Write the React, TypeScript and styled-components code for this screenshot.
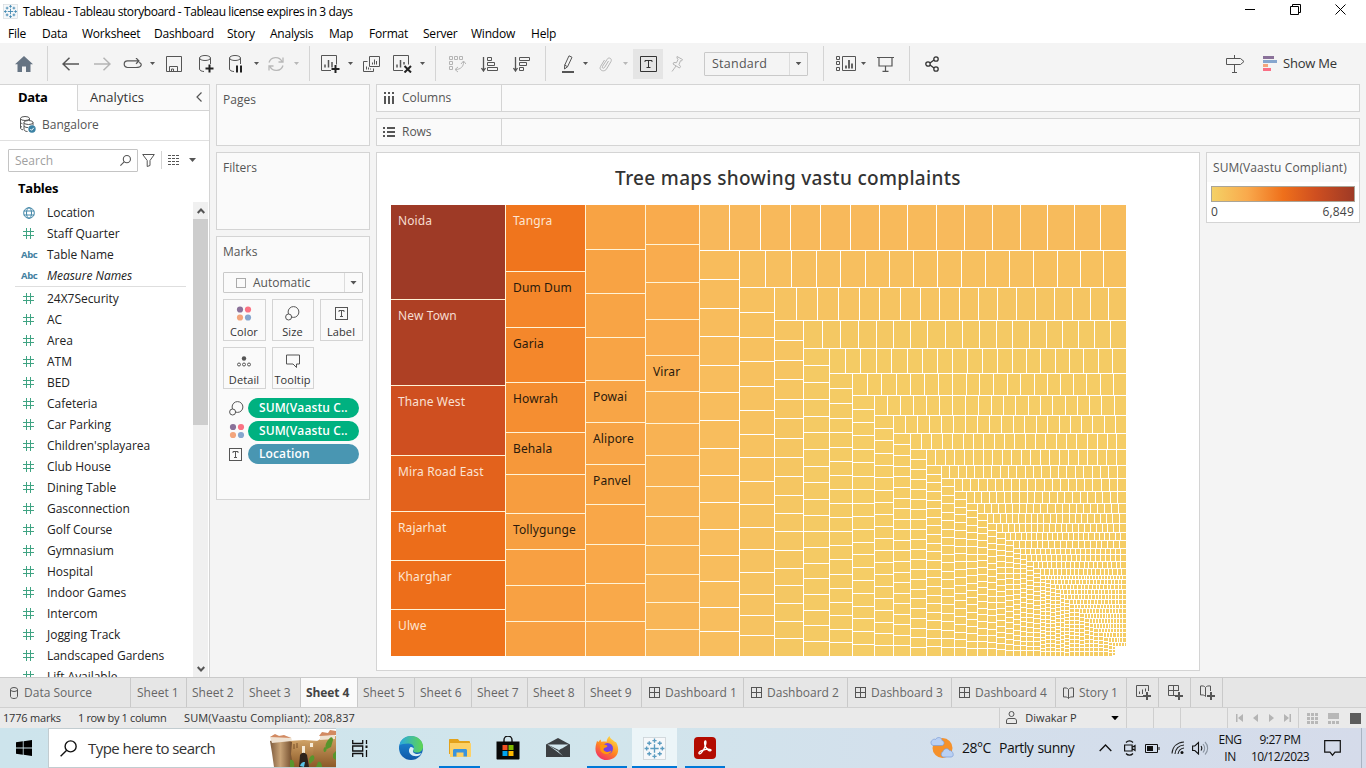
import React from "react";
import styled, { createGlobalStyle } from "styled-components";

const ui = `"Open Sans", "Noto Sans", sans-serif`;
const win = `"Open Sans", "Noto Sans", sans-serif`;
const chart = `"Noto Sans", "Open Sans", sans-serif`;
const line = "#d4d4d4";

const Global = createGlobalStyle`
  * { box-sizing: border-box; }
  html, body { margin: 0; padding: 0; overflow: hidden; }
  body { width: 1366px; height: 768px; font-family: ${ui}; font-size: 12px; color: #333; background: #f5f5f5; }
  svg { display: block; flex: none; }
`;

const Window = styled.div`
  width: 1366px;
  height: 768px;
  display: flex;
  flex-direction: column;
  overflow: hidden;
  white-space: nowrap;
`;

/* ---------- title and menu ---------- */
const TitleBar = styled.header`
  height: 24px;
  flex: none;
  background: #fff;
  display: flex;
  align-items: center;
  padding: 0 0 2px 3px;
  font-family: ${win};
  font-size: 12px;
  letter-spacing: -0.41px;
  color: #000;
`;
const TitleText = styled.span`
  margin-left: 5px;
  flex: 1;
`;
const Controls = styled.div`
  display: flex;
  gap: 34px;
  margin-right: 20px;
  margin-top: -3px;
`;
const MenuBar = styled.nav`
  height: 19px;
  flex: none;
  background: #fff;
  display: flex;
  font-family: ${win};
  font-size: 12px;
  line-height: 19px;
  letter-spacing: -0.22px;
  color: #000;
`;
const MenuItem = styled.span<{ $w: number }>`
  width: ${(p) => p.$w}px;
  flex: none;
`;

/* ---------- toolbar ---------- */
const Toolbar = styled.div`
  height: 41px;
  flex: none;
  background: #f4f4f4;
  display: flex;
  align-items: center;
`;
const Tool = styled.div<{ $gap: number; $w: number; $on?: boolean }>`
  margin-left: ${(p) => p.$gap}px;
  width: ${(p) => p.$w}px;
  height: ${(p) => (p.$on ? 30 : 20)}px;
  flex: none;
  display: flex;
  align-items: center;
  justify-content: center;
  background: ${(p) => (p.$on ? "#e5e5e5" : "transparent")};
`;
const Rule = styled.div<{ $gap: number }>`
  margin-left: ${(p) => p.$gap}px;
  width: 1px;
  height: 35px;
  flex: none;
  background: #d4d4d4;
`;
const Caret = styled.div<{ $gap?: number; $c?: string; $s?: number }>`
  margin-left: ${(p) => p.$gap ?? 0}px;
  flex: none;
  width: ${(p) => (p.$s ?? 2.5) * 2}px;
  height: ${(p) => (p.$s ?? 2.5) + 0.5}px;
  background: ${(p) => p.$c ?? "#555"};
  clip-path: polygon(0 0, 100% 0, 50% 100%);
`;
const Select = styled.div<{ $w: number; $h: number; $gap?: number; $drop: number }>`
  margin-left: ${(p) => p.$gap ?? 0}px;
  width: ${(p) => p.$w}px;
  height: ${(p) => p.$h}px;
  border: 1px solid #c9c9c9;
  border-radius: 1px;
  display: flex;
  flex: none;
  align-items: center;
  > :last-child {
    width: ${(p) => p.$drop}px;
  }
`;
const SelectText = styled.span<{ $size: number; $pad: number; $ls?: number }>`
  flex: 1;
  display: flex;
  align-items: center;
  gap: 7px;
  padding-left: ${(p) => p.$pad}px;
  font-size: ${(p) => p.$size}px;
  letter-spacing: ${(p) => p.$ls ?? 0}px;
  color: #555;
`;
const Drop = styled.span`
  height: 100%;
  border-left: 1px solid #dcdcdc;
  display: flex;
  align-items: center;
  justify-content: center;
`;
const ShowMe = styled.span`
  margin-left: 6px;
  padding-bottom: 2px;
  font-size: 13px;
  letter-spacing: -0.2px;
  color: #333;
`;

/* ---------- workspace ---------- */
const Work = styled.main`
  height: 593px;
  flex: none;
  display: flex;
  background: #f4f4f4;
`;
const Side = styled.aside`
  width: 210px;
  flex: none;
  background: #fff;
  border-right: 1px solid ${line};
  border-top: 1px solid ${line};
  display: flex;
  flex-direction: column;
`;
const SideTabs = styled.div`
  display: flex;
  height: 26px;
  flex: none;
`;
const SideTab = styled.div<{ $active?: boolean }>`
  width: ${(p) => (p.$active ? 77 : 132)}px;
  padding: 0 7px 2px ${(p) => (p.$active ? 18 : 12)}px;
  display: flex;
  align-items: center;
  justify-content: space-between;
  font-size: 13px;
  font-weight: ${(p) => (p.$active ? 700 : 400)};
  letter-spacing: ${(p) => (p.$active ? -0.4 : 0.05)}px;
  color: ${(p) => (p.$active ? "#000" : "#333")};
  background: ${(p) => (p.$active ? "#fff" : "#fafafa")};
  border: 0 solid ${line};
  border-width: ${(p) => (p.$active ? "0" : "0 0 1px 1px")};
`;
const Source = styled.div`
  height: 30px;
  flex: none;
  border-bottom: 1px solid #e0e0e0;
  padding: 0 0 2px 19px;
  display: flex;
  align-items: center;
  gap: 6px;
  font-size: 12px;
  color: #555;
`;
const SearchRow = styled.div`
  height: 38px;
  flex: none;
  padding-left: 8px;
  display: flex;
  align-items: center;
`;
const SearchBox = styled.div`
  width: 130px;
  height: 23px;
  border: 1px solid #c4c4c4;
  border-radius: 1px;
  padding: 0 6px;
  display: flex;
  align-items: center;
  justify-content: space-between;
  color: #a0a0a0;
  font-size: 12px;
`;
const TablesHead = styled.div`
  height: 23px;
  flex: none;
  padding-left: 18px;
  line-height: 19px;
  font-size: 13px;
  font-weight: 700;
  letter-spacing: -0.25px;
  color: #000;
`;
const FieldArea = styled.div`
  height: 475px;
  display: flex;
  overflow: hidden;
`;
const Fields = styled.div`
  width: 193px;
`;
const Field = styled.div<{ $italic?: boolean }>`
  height: 21px;
  padding-left: 19px;
  display: flex;
  align-items: center;
  font-size: 12px;
  letter-spacing: -0.03px;
  color: #222;
  font-style: ${(p) => (p.$italic ? "italic" : "normal")};
`;
const FieldIcon = styled.span`
  width: 28px;
  flex: none;
  display: flex;
  padding-left: 4px;
`;
const Abc = styled.span`
  margin-left: -2px;
  font-family: "Open Sans", sans-serif;
  font-style: normal;
  font-size: 9.5px;
  font-weight: 700;
  letter-spacing: -0.4px;
  color: #4381a1;
`;
const FieldRule = styled.div`
  height: 1px;
  margin: 0 7px 1px 15px;
  background: #dedede;
`;
const Scroll = styled.div`
  width: 15px;
  background: #f0f0f0;
  display: flex;
  flex-direction: column;
  align-items: center;
`;
const ScrollEnd = styled.div`
  height: 17px;
  flex: none;
  display: flex;
  align-items: center;
`;
const Thumb = styled.div`
  height: 206px;
  width: 15px;
  flex: none;
  background: #cdcdcd;
  margin-bottom: auto;
`;

const Shelves = styled.div`
  width: 154px;
  margin-left: 6px;
  flex: none;
  display: flex;
  flex-direction: column;
  gap: 6px;
`;
const Card = styled.section<{ $h: number }>`
  height: ${(p) => p.$h}px;
  flex: none;
  border: 1px solid ${line};
  background: #fafafa;
`;
const CardTitle = styled.div`
  padding: 0 6px;
  height: 29px;
  line-height: 30px;
  font-size: 12px;
  color: #555;
`;
const MarksBody = styled.div`
  padding: 6px 6px 0;
`;
const MarkGrid = styled.div`
  margin-top: 6px;
  display: grid;
  grid-template-columns: 43px 42px 43px;
  grid-template-rows: 42px 42px;
  gap: 6px;
`;
const MarkButton = styled.div`
  border: 1px solid ${line};
  display: flex;
  flex-direction: column;
  align-items: center;
  justify-content: space-between;
  padding: 5px 1px 0 0;
  font-size: 11px;
  line-height: 17px;
  letter-spacing: 0.1px;
  color: #333;
  svg {
    height: 17px;
  }
`;
const Pills = styled.div`
  margin-top: 9px;
  display: flex;
  flex-direction: column;
  gap: 3px;
`;
const PillRow = styled.div`
  height: 20px;
  padding-left: 6px;
  display: flex;
  align-items: center;
  justify-content: space-between;
  padding-right: 4px;
`;
const Pill = styled.div<{ $c: string }>`
  width: 111px;
  height: 20px;
  border-radius: 10px;
  padding-left: 11px;
  line-height: 19px;
  font-size: 12px;
  font-weight: 600;
  letter-spacing: 0.1px;
  color: #fff;
  background: ${(p) => p.$c};
`;

const Canvas = styled.div`
  width: 984px;
  margin-left: 6px;
  flex: none;
  display: flex;
  flex-direction: column;
  gap: 6px;
`;
const Shelf = styled.div`
  height: 28px;
  flex: none;
  border: 1px solid ${line};
  background: #fafafa;
  display: flex;
`;
const ShelfName = styled.div`
  width: 125px;
  border-right: 1px solid ${line};
  padding: 0 0 1px 6px;
  display: flex;
  align-items: center;
  gap: 7px;
  font-size: 12px;
  letter-spacing: -0.02px;
  color: #555;
`;
const ViewRow = styled.div`
  display: flex;
  gap: 6px;
`;
const View = styled.section`
  width: 824px;
  height: 519px;
  border: 1px solid ${line};
  background: #fff;
  padding-left: 14px;
`;
const ViewTitle = styled.h1`
  margin: 0 14px 0 0;
  height: 52px;
  line-height: 50px;
  text-align: center;
  font-family: ${chart};
  font-size: 19px;
  font-weight: 500;
  letter-spacing: 0.32px;
  color: #333;
`;
const CellLabel = styled.text`
  font-family: ${chart};
  font-size: 12px;
  letter-spacing: 0.12px;
`;
const Legend = styled.section`
  width: 154px;
  height: 71px;
  border: 1px solid ${line};
  background: #fff;
`;
const LegendTitle = styled.div`
  height: 29px;
  line-height: 30px;
  padding-left: 6px;
  background: #fafafa;
  font-size: 12px;
  letter-spacing: 0.1px;
  color: #555;
`;
const Ramp = styled.div`
  margin: 4px 4px 0;
  height: 16px;
  border: 1px solid #aaa598;
  background: linear-gradient(90deg, #f4d166, #f9a94c 25%, #ef701b 50%, #cf4f20 73%, #9e3a26);
`;
const RampEnds = styled.div`
  padding: 0 5px 0 4px;
  display: flex;
  justify-content: space-between;
  font-size: 12px;
  line-height: 19px;
  letter-spacing: 0.2px;
  color: #444;
`;

/* ---------- sheet tabs and status ---------- */
const Tabs = styled.div`
  height: 31px;
  flex: none;
  display: flex;
  background: #e6e6e6;
  border-top: 1px solid #cacaca;
  border-bottom: 1px solid #d0d0d0;
`;
const Tab = styled.div<{ $w: number; $pad: number; $active?: boolean }>`
  width: ${(p) => p.$w}px;
  flex: none;
  border-right: 1px solid #c9c9c9;
  padding-left: ${(p) => p.$pad}px;
  display: flex;
  align-items: center;
  gap: 5px;
  font-size: 12px;
  letter-spacing: ${(p) => (p.$active ? -0.1 : 0)}px;
  font-weight: ${(p) => (p.$active ? 700 : 400)};
  color: ${(p) => (p.$active ? "#444" : "#666")};
  background: ${(p) => (p.$active ? "#fafafa" : "transparent")};
`;
const Status = styled.div`
  height: 20px;
  flex: none;
  display: flex;
  background: #eaeaea;
  font-size: 11px;
  line-height: 20px;
  color: #333;
`;
const StatusText = styled.span<{ $w: number; $ls?: number }>`
  width: ${(p) => p.$w}px;
  letter-spacing: ${(p) => p.$ls ?? 0}px;
  flex: none;
`;
const StatusCell = styled.div<{ $w: number }>`
  width: ${(p) => p.$w}px;
  flex: none;
  border-left: 1px solid #cfcfcf;
  display: flex;
  align-items: center;
`;

/* ---------- taskbar ---------- */
const Taskbar = styled.footer`
  height: 40px;
  flex: none;
  display: flex;
  background: linear-gradient(90deg, #cde4ec, #d1e5ec 45%, #d3e0ec 65%, #d5dbea);
  font-family: ${win};
  color: #111;
`;
const Launch = styled.div<{ $gap: number; $w: number; $open?: boolean; $active?: boolean }>`
  margin-left: ${(p) => p.$gap}px;
  width: ${(p) => p.$w}px;
  flex: none;
  display: flex;
  align-items: center;
  justify-content: center;
  background: ${(p) => (p.$active ? "#ecf5f8" : "transparent")};
  box-shadow: ${(p) => (p.$open ? "inset 0 -2px #0078d7" : "none")};
`;
const TaskSearch = styled.div`
  width: 288px;
  border: 1px solid #c2ccd0;
  border-right: 0;
  background: #fff;
  display: flex;
  align-items: center;
  padding-left: 11px;
`;
const TaskSearchText = styled.span`
  flex: 1;
  margin-left: 11px;
  font-size: 15px;
  letter-spacing: -0.57px;
  color: #333;
`;
const Weather = styled.span`
  margin-left: 7px;
  width: 134px;
  line-height: 40px;
  font-size: 14px;
  letter-spacing: -0.52px;
  word-spacing: 1px;
`;
const Stack = styled.div<{ $w: number; $gap: number }>`
  margin-left: ${(p) => p.$gap}px;
  width: ${(p) => p.$w}px;
  flex: none;
  text-align: center;
  font-size: 12px;
  line-height: 17px;
  padding-top: 3px;
  letter-spacing: -0.55px;
`;
const Edge = styled.div`
  margin-left: auto;
  margin-right: 4px;
  width: 1px;
  background: #a9b4c2;
`;

/* ---------- icons ---------- */
type IconProps = { w: number; h: number; c?: string; sw?: number; children: React.ReactNode };
const Icon = ({ w, h, c = "#555", sw = 1, children }: IconProps) => (
  <svg width={w} height={h} viewBox={`0 0 ${w} ${h}`} fill="none" stroke={c} strokeWidth={sw}>
    {children}
  </svg>
);

const Db = ({ children }: { children: React.ReactNode }) => (
  <Icon w={16} h={20}>
    <ellipse cx="6" cy="4" rx="5.5" ry="2.5" />
    <path d="M.5 4v11c0 1.4 2 2.4 4.5 2.5M11.5 4v6" />
    {children}
  </Icon>
);
const Sizes = () => (
  <Icon w={15} h={15}>
    <circle cx="8.5" cy="6" r="5.4" />
    <circle cx="3.6" cy="11" r="3" fill="#fafafa" />
  </Icon>
);
const Dots4 = () => (
  <Icon w={16} h={16} c="none">
    <circle cx="4" cy="4" r="3.1" fill="#8a7199" />
    <circle cx="12" cy="4" r="3.1" fill="#fa7283" />
    <circle cx="4" cy="12" r="3.1" fill="#f3a57c" />
    <circle cx="12" cy="12" r="3.1" fill="#86a6ce" />
  </Icon>
);
const TBox = ({ s = 13, c = "#555" }: { s?: number; c?: string }) => {
  const m = s / 2;
  return (
    <Icon w={s} h={s} c={c}>
      <rect x=".5" y=".5" width={s - 1} height={s - 1} />
      <path d={`M${m - 2.5} ${m - 1.5}v-1.5h5v1.5M${m} ${m - 3}v6M${m - 1.5} ${m + 3}h3`} />
    </Icon>
  );
};
const GridIcon = () => (
  <Icon w={11} h={11}>
    <rect x=".5" y=".5" width="10" height="10" />
    <path d="M5.5 0v11M0 5.5h11" />
  </Icon>
);
const Book = () => (
  <Icon w={11} h={12}>
    <path d="M.5 1c2-.3 4 0 5 1.500 1-1.500 3-1.800 5-1.500v9c-2-.3-4 0-5 1.500-1-1.500-3-1.800-5-1.500zM5.500 2.500v9" />
  </Icon>
);
const Magnifier = ({ s, c = "#555" }: { s: number; c?: string }) => (
  <svg width={s} height={s} viewBox="0 0 16 16" fill="none" stroke={c} strokeWidth={s > 12 ? 1.3 : 1.6}>
    <circle cx="10" cy="6" r="5.200" />
    <path d="M6.300 9.700L.6 15.400" />
  </svg>
);
const Hash = () => (
  <Icon w={11} h={11} c="#3fa382">
    <path d="M3.500 0v11M7.500 0v11M0 3.500h11M0 7.500h11" />
  </Icon>
);
const Globe = () => (
  <Icon w={12} h={12} c="#4487a8">
    <circle cx="6" cy="6" r="5.300" />
    <ellipse cx="6" cy="6" rx="2.500" ry="5.300" />
    <path d="M.7 4h10.600M.7 8h10.600" />
  </Icon>
);
const Sparks = ({ s, c = "#3f87b0" }: { s: number; c?: string }) => (
  <svg width={s} height={s} viewBox="0 0 22 22" fill="none" stroke={c} strokeWidth="1.300">
    <rect x=".5" y=".5" width="21" height="21" fill="#f6f8fa" stroke="#ccd3d8" strokeWidth=".8" />
    <path d="M11 7v8M7 11h8M11 1.500v4M9 3.500h4M11 16.500v4M9 18.500h4M3.500 9v4M1.500 11h4M18.500 9v4M16.500 11h4" />
    <path d="M6 4v4M4 6h4M16 4v4M14 6h4M6 14v4M4 16h4M16 14v4M14 16h4" />
  </svg>
);

/* ---------- treemap ---------- */
type Strip = { end: number; cuts: number[] | number; from: string; to?: string };

const pale = "#f5cd66";
const columns: Strip[] = [
  { end: 699, cuts: [], from: "#f9a94b" },
  { end: 739, cuts: [279, 308, 336, 365, 392, 420, 448, 475, 502, 529, 555, 581, 607, 631], from: "#f8bc5c", to: "#f8be5e" },
  { end: 774, cuts: [312, 337, 361, 386, 410, 434, 457, 481, 504, 527, 549, 572, 594, 615, 635], from: "#f7c15f", to: "#f6c361" },
  { end: 803, cuts: [340, 360, 379, 399, 418, 438, 457, 476, 495, 513, 531, 550, 568, 585, 603, 621, 638], from: "#f6c562", to: "#f4c863" },
  { end: 829, cuts: [365, 382, 399, 416, 432, 449, 466, 482, 499, 515, 531, 547, 563, 578, 594, 610, 625, 641], from: "#f4ca64" },
  { end: 852, cuts: [388, 403, 418, 432, 447, 461, 475, 489, 503, 517, 531, 545, 559, 574, 588, 602, 615, 629, 642], from: "#f4cb64" },
  { end: 874, cuts: [409, 422, 435, 449, 462, 476, 489, 503, 516, 529, 542, 554, 567, 580, 593, 606, 618, 631, 644], from: pale },
  { end: 893, cuts: [428, 440, 453, 465, 477, 490, 502, 514, 526, 538, 550, 562, 574, 586, 598, 610, 622, 633, 645], from: pale },
  { end: 910, cuts: [444, 455, 466, 476, 487, 498, 508, 519, 529, 540, 550, 561, 572, 582, 593, 603, 614, 624, 635, 645], from: pale },
  { end: 926, cuts: [459, 469, 479, 489, 499, 509, 519, 529, 539, 549, 559, 569, 579, 589, 598, 608, 618, 628, 637, 647], from: pale },
  ...(
    [
      [941, 8.65], [954, 8.5], [966, 7.7], [977, 7.4], [987, 6.8], [996, 6.5], [1005, 5.8], [1013, 5.5],
      [1020, 5], [1026, 4.8], [1033, 4.8], [1040, 4.5], [1045, 3.7], [1050, 4], [1055, 4], [1060, 3.7],
      [1064, 4], [1069, 3.5], [1074, 4], [1079, 4], [1084, 4], [1089, 4], [1093, 3.8], [1098, 3.8],
      [1103, 3.8], [1108, 3.8], [1112, 3],
    ] as [number, number][]
  ).map(([end, cuts]) => ({ end, cuts, from: pale })),
];
const rows: Strip[] = [
  { end: 250, cuts: [729, 760, 790, 820, 850, 879, 907, 936, 964, 992, 1020, 1047, 1074, 1100], from: "#f8b85b", to: "#f7bc5c" },
  { end: 287, cuts: [765, 791, 816, 840, 865, 889, 913, 937, 961, 985, 1009, 1033, 1057, 1080, 1103], from: "#f7bf5f", to: "#f7c15f" },
  { end: 320, cuts: [796, 817, 838, 859, 879, 900, 920, 939, 959, 978, 997, 1016, 1035, 1054, 1072, 1090, 1108], from: "#f6c361", to: "#f5c662" },
  { end: 348, cuts: [822, 840, 858, 876, 893, 910, 927, 945, 962, 979, 996, 1012, 1029, 1046, 1062, 1078, 1094, 1110], from: "#f4c863", to: "#f4ca64" },
  { end: 373, cuts: [845, 860, 876, 891, 907, 922, 937, 952, 967, 982, 997, 1012, 1026, 1040, 1055, 1069, 1083, 1098, 1112], from: "#f4cb64" },
  { end: 395, cuts: [867, 881, 896, 910, 924, 938, 952, 966, 979, 993, 1007, 1020, 1034, 1047, 1060, 1073, 1086, 1100, 1113], from: "#f5cc65" },
  { end: 415, cuts: [887, 900, 913, 926, 939, 952, 965, 978, 991, 1003, 1015, 1028, 1040, 1052, 1065, 1077, 1089, 1101, 1114], from: pale },
  { end: 433, cuts: [905, 917, 929, 941, 953, 965, 977, 989, 1001, 1013, 1024, 1036, 1047, 1059, 1070, 1081, 1092, 1104, 1115], from: pale },
  { end: 449, cuts: [921, 931, 942, 952, 963, 973, 983, 994, 1004, 1014, 1025, 1035, 1045, 1056, 1066, 1076, 1087, 1097, 1107, 1116], from: pale },
  ...(
    [
      [465, 9.5], [478, 8.4], [491, 8], [503, 7.4], [513, 6.9], [523, 6.2], [532, 6], [540, 5.3], [548, 5.9],
      [554, 4.9], [561, 5], [568, 4.6], [575, 4.3], [579, 3], [584, 3.6], [589, 3.6], [594, 3.4], [599, 3.4],
      [604, 3.4], [608, 3.2], [613, 3.2], [618, 3], [623, 3], [628, 3], [632, 3], [637, 3], [642, 3],
    ] as [number, number][]
  ).map(([end, cuts]) => ({ end, cuts, from: pale })),
];

const mix = (a: string, b: string, t: number) =>
  "#" +
  [1, 3, 5]
    .map((i) => {
      const p = parseInt(a.slice(i, i + 2), 16);
      const q = parseInt(b.slice(i, i + 2), 16);
      return Math.round(p + (q - p) * t).toString(16).padStart(2, "0");
    })
    .join("");

const RIGHT = 1126;
const BOTTOM = 656;
type Cell = { x: number; y: number; w: number; h: number; fill: string };

const resolve = (cuts: number[] | number, start: number, end: number) => {
  if (Array.isArray(cuts)) return cuts;
  const n = Math.round((end - start) / cuts);
  return Array.from({ length: n - 1 }, (_, i) => Math.round(start + ((end - start) * (i + 1)) / n) - 1);
};
const column = (x: number, end: number, y: number, s: number[] | number, fills: (i: number, n: number) => string) => {
  const cuts = resolve(s, y, BOTTOM);
  const edges = [y - 1, ...cuts, BOTTOM];
  return edges.slice(1).map((e, i): Cell => ({
    x, y: edges[i] + 1, w: end - x, h: e - edges[i] - 1, fill: fills(i, edges.length - 1),
  }));
};

const bigColumns = [
  {
    x: 391, end: 505, cuts: [299, 385, 455, 511, 560, 609],
    fills: ["#9e3a26", "#ae4024", "#cf4f20", "#e3621c", "#ec6d1a", "#ed6e1a", "#f0731b"],
  },
  {
    x: 506, end: 585, cuts: [271, 327, 382, 432, 474, 513, 549, 585, 621],
    fills: ["#f0751d", "#f4862a", "#f4872b", "#f58e31", "#f6983a", "#f79d3f", "#f79f41", "#f8a042", "#f8a143", "#f8a143"],
  },
  {
    x: 586, end: 645, cuts: [249, 293, 337, 380, 422, 464, 504, 544, 583, 621],
    fills: ["#f8a344", "#f8a344", "#f8a445", "#f8a445", "#f8a546", "#f8a547", "#f8a647", "#f9a748", "#f9a849", "#f9a94a", "#f9aa4b"],
  },
  {
    x: 646, end: 699, cuts: [244, 282, 319, 355, 391, 423, 455, 486, 516, 545, 574, 602, 629],
    fills: ["#f9ab4d", "#f9ac4e", "#f9ad4f", "#f9ad4f", "#f9ae50", "#f8b152", "#f8b253", "#f8b354", "#f8b455", "#f8b455", "#f8b556", "#f8b557", "#f8b657", "#f8b658"],
  },
];

const buildCells = () => {
  const cells: Cell[] = [];
  bigColumns.forEach((c) => cells.push(...column(c.x, c.end, 205, c.cuts, (i) => c.fills[i])));
  let left = 700;
  let top = 205;
  rows.forEach((r, k) => {
    const xs = [left - 1, ...resolve(r.cuts, left, RIGHT), RIGHT];
    xs.slice(1).forEach((e, i) =>
      cells.push({ x: xs[i] + 1, y: top, w: e - xs[i] - 1, h: r.end - top, fill: mix(r.from, r.to ?? r.from, i / xs.length) })
    );
    top = r.end + 1;
    const c = columns[k + 1];
    if (!c) return;
    cells.push(...column(left, c.end, top, c.cuts, (i, n) => mix(c.from, c.to ?? c.from, i / n)));
    left = c.end + 1;
  });
  for (let i = 0; i < 5; i++) cells.push({ x: 1113 + i * 3, y: 643, w: 2, h: 3, fill: pale });
  for (let i = 0; i < 3; i++) cells.push({ x: 1113, y: 647 + i * 3, w: 2, h: 2, fill: pale });
  return cells.filter((c) => c.w > 0 && c.h > 0);
};
const cells = buildCells();

const labels: [string, number, number, string][] = [
  ["Noida", 398, 225, "#f6dcd0"], ["New Town", 398, 320, "#f6dcd0"], ["Thane West", 398, 406, "#fae0d4"],
  ["Mira Road East", 398, 476, "#fbe3d3"], ["Rajarhat", 398, 532, "#fde5d2"], ["Kharghar", 398, 581, "#fde5d2"],
  ["Ulwe", 398, 630, "#fde5d2"], ["Tangra", 513, 225, "#fde5d2"], ["Dum Dum", 513, 292, "#2b1a0c"],
  ["Garia", 513, 348, "#2b1a0c"], ["Howrah", 513, 403, "#2b1a0c"], ["Behala", 513, 453, "#2b1a0c"],
  ["Tollygunge", 513, 534, "#2b1a0c"], ["Powai", 593, 401, "#2b1a0c"], ["Alipore", 593, 443, "#2b1a0c"],
  ["Panvel", 593, 485, "#2b1a0c"], ["Virar", 653, 376, "#2b1a0c"],
];

const TreeMap = () => (
  <svg width="735" height="451" viewBox="391 205 735 451">
    <g shapeRendering="crispEdges">
      <rect x="391" y="205" width="309" height="451" fill="#fff3d6" />
      {cells.map((c, i) => (
        <rect key={i} x={c.x} y={c.y} width={c.w} height={c.h} fill={c.fill} />
      ))}
    </g>
    {labels.map(([t, x, y, f]) => (
      <CellLabel key={t} x={x} y={y} fill={f}>
        {t}
      </CellLabel>
    ))}
  </svg>
);

const menu: [string, number][] = [
  ["File", 34], ["Data", 40], ["Worksheet", 72], ["Dashboard", 73], ["Story", 43], ["Analysis", 59],
  ["Map", 40], ["Format", 54], ["Server", 48], ["Window", 60], ["Help", 40],
];
const dims: [string, string][] = [
  ["globe", "Location"], ["hash", "Staff Quarter"], ["abc", "Table Name"], ["abc", "Measure Names"],
];
const measures = [
  "24X7Security", "AC", "Area", "ATM", "BED", "Cafeteria", "Car Parking", "Children'splayarea", "Club House",
  "Dining Table", "Gasconnection", "Golf Course", "Gymnasium", "Hospital", "Indoor Games", "Intercom",
  "Jogging Track", "Landscaped Gardens", "Lift Available",
];
const sheets: [string, number][] = [
  ["Sheet 1", 56], ["Sheet 2", 57], ["Sheet 3", 57], ["Sheet 4", 57], ["Sheet 5", 57], ["Sheet 6", 57],
  ["Sheet 7", 56], ["Sheet 8", 57], ["Sheet 9", 57],
];
const boards: [string, number][] = [
  ["Dashboard 1", 102], ["Dashboard 2", 104], ["Dashboard 3", 104], ["Dashboard 4", 104],
];

const MainToolbar = () => (
  <Toolbar>
    <Tool $gap={15} $w={18}>
      <Icon w={18} h={16} c="none">
        <path d="M9 0l9 8.300h-2.500V16h-4.500v-5.500H7V16H2.500V8.300H0z" fill="#667483" />
      </Icon>
    </Tool>
    <Rule $gap={14} />
    <Tool $gap={14} $w={17}>
      <Icon w={17} h={14} sw={1.500}>
        <path d="M17 7H1M7.500.7L1 7l6.500 6.300" />
      </Icon>
    </Tool>
    <Tool $gap={15} $w={17}>
      <Icon w={17} h={14} sw={1.500} c="#b4b4b4">
        <path d="M0 7h16M9.500.7L16 7l-6.500 6.300" />
      </Icon>
    </Tool>
    <Tool $gap={12} $w={19}>
      <Icon w={19} h={12} sw={1.200}>
        <path d="M13 9.500H4.500a3.300 3.300 0 0 1 0-6.600H16M13 0l3 2.900-3 2.900M16 4.500c2 .5 2.500 2 2 3-.5 1.500-2 2-5 2" />
      </Icon>
    </Tool>
    <Caret $gap={8} />
    <Tool $gap={11} $w={16}>
      <Icon w={16} h={16}>
        <path d="M.5.5h15v15H.5zM3.500 15.500v-5h8v5M5.500 15.500v-2.500h2v2.500" />
      </Icon>
    </Tool>
    <Tool $gap={17} $w={16}>
      <Db>
        <path d="M10.500 10.500v8M6.500 14.500h8" stroke="#222" strokeWidth="2" />
      </Db>
    </Tool>
    <Tool $gap={14} $w={16}>
      <Db>
        <path d="M8 11.500v7M12 11.500v7" stroke="#222" strokeWidth="2" />
      </Db>
    </Tool>
    <Caret $gap={9} />
    <Tool $gap={8} $w={18}>
      <Icon w={18} h={16} c="#b8b8b8" sw={1.300}>
        <path d="M2 6.500a7 7 0 0 1 13-1M16 9.500a7 7 0 0 1-13 1M16 1.500v4.500h-4.500M2 14.500V10h4.500" />
      </Icon>
    </Tool>
    <Caret $gap={9} $c="#b8b8b8" />
    <Rule $gap={10} />
    <Tool $gap={11} $w={19}>
      <Icon w={19} h={18}>
        <path d="M10 15.500H.5V.5h15v9" />
        <path d="M4 12.500v-3M7.500 12.500V5M11 12.500V7" strokeWidth="1.500" />
        <path d="M14.500 10v8M10.500 14h8" stroke="#222" strokeWidth="2" />
      </Icon>
    </Tool>
    <Caret $gap={8} />
    <Tool $gap={10} $w={17}>
      <Icon w={17} h={16}>
        <path d="M6.500.5h10v10h-10zM4.500 5.500h-4v10h10v-3M9.500 8.500v-2M11.500 8.500v-5M13.500 8.500V5M3.500 13.500v-3M5.500 13.500v-2M7.500 13.500v-1" />
      </Icon>
    </Tool>
    <Tool $gap={13} $w={19}>
      <Icon w={19} h={18}>
        <path d="M10 15.500H.5V.5h15v9" />
        <path d="M4 12.500v-3M7.500 12.500V5M11 9.500V7" strokeWidth="1.500" />
        <path d="M11.500 11l6.500 6.500M18 11l-6.500 6.500" stroke="#222" strokeWidth="2" />
      </Icon>
    </Tool>
    <Caret $gap={8} />
    <Rule $gap={10} />
    <Tool $gap={13} $w={17}>
      <Icon w={17} h={18} c="#b4b4b4">
        <path d="M.5 1.500h3v3h-3zM5.500 1.500h3v3h-3zM10.500 1.500h3v3h-3zM.5 6.500h3v3h-3zM.5 11.500h3v3h-3zM14.500 6.500c.5 5-3 8-8 8M12 9l2.500-3 2.500 3M9 12l-3 2.500 3 2.500" />
      </Icon>
    </Tool>
    <Tool $gap={15} $w={17}>
      <Icon w={17} h={16}>
        <path d="M2.500 1v14M.5 12l2 3 2-3" strokeWidth="1.300" />
        <path d="M6.500 1.500h4v3h-4zM6.500 6.500h7v3h-7zM6.500 11.500h10v3h-10z" />
      </Icon>
    </Tool>
    <Tool $gap={15} $w={17}>
      <Icon w={17} h={16}>
        <path d="M2.500 1v14M.5 12l2 3 2-3" strokeWidth="1.300" />
        <path d="M6.500 1.500h10v3h-10zM6.500 6.500h7v3h-7zM6.500 11.500h4v3h-4z" />
      </Icon>
    </Tool>
    <Rule $gap={15} />
    <Tool $gap={16} $w={12}>
      <Icon w={12} h={18}>
        <path d="M7 .8l3 1.500-4.500 9.500-3 2.200.2-3.800zM2.500 10l3 1.700" />
        <path d="M0 17h12" strokeWidth="2" />
      </Icon>
    </Tool>
    <Caret $gap={9} />
    <Tool $gap={11} $w={13}>
      <Icon w={13} h={16} c="#b4b4b4">
        <path d="M9.500 5l-4 6.500c-1 1.500-3 .3-2-1.200L8 3.500c1.500-3 5.500-1 4 2L7.500 13c-2 3.500-8 1.500-6-2.500L5.500 4" />
      </Icon>
    </Tool>
    <Caret $gap={11} $c="#b8b8b8" />
    <Tool $gap={5} $w={30} $on>
      <Icon w={17} h={16} c="#333">
        <path d="M.5.5h16v15H.5zM5 6V4.500h7V6M8.500 4.500v7M6.500 11.500h4" />
      </Icon>
    </Tool>
    <Tool $gap={8} $w={12}>
      <Icon w={12} h={16} c="#b4b4b4">
        <path d="M6 .5l5.500 3-1 1.500-1-.3L8 8.500l1.500 2L8.500 12 2 8l.8-1.500 2.700.2L7 3.500 6 2zM5 10L1 15.500" />
      </Icon>
    </Tool>
    <Select $gap={21} $w={104} $h={24} $drop={18}>
      <SelectText $size={12.5} $pad={7} $ls={0.25}>
        Standard
      </SelectText>
      <Drop>
        <Caret $s={3} />
      </Drop>
    </Select>
    <Rule $gap={15} />
    <Tool $gap={12} $w={20}>
      <Icon w={20} h={15}>
        <path d="M.5.5h3v3h-3zM.5 5.500h3v3h-3zM.5 11.500h3v3h-3zM6.500.5h13v14h-13z" />
        <path d="M10 12.500v-3M13 12.500V4M16 12.500v-5" strokeWidth="1.800" />
      </Icon>
    </Tool>
    <Caret $gap={5} />
    <Tool $gap={11} $w={17}>
      <Icon w={17} h={16} sw={1.200}>
        <path d="M0 1.500h17M2 1.500V10h13V1.500M8.500 10v5.500M5.500 15.400h6" />
      </Icon>
    </Tool>
    <Rule $gap={15} />
    <Tool $gap={15} $w={14}>
      <Icon w={14} h={16} sw={1.300} c="#333">
        <circle cx="3" cy="8" r="2.200" />
        <circle cx="11" cy="3" r="2.200" />
        <circle cx="11" cy="13" r="2.200" />
        <path d="M5 7l4-3M5 9l4 3" />
      </Icon>
    </Tool>
    <Tool $gap={287} $w={19}>
      <Icon w={19} h={18}>
        <path d="M.5 3.500h14l3.500 3-3.500 3H.5zM8.500 0v3.500M8.500 9.500v8M6 17.500h5" />
      </Icon>
    </Tool>
    <Tool $gap={18} $w={14}>
      <Icon w={14} h={15} c="none">
        <path d="M0 0h11v3H0z" fill="#8a7199" />
        <path d="M0 4h14v3H0z" fill="#86a6ce" />
        <path d="M0 8h5v3H0z" fill="#f3a57c" />
        <path d="M0 12h8v3H0z" fill="#fa6f85" />
      </Icon>
    </Tool>
    <ShowMe>Show Me</ShowMe>
  </Toolbar>
);

const DataPane = () => (
  <Side>
    <SideTabs>
      <SideTab $active>Data</SideTab>
      <SideTab>
        Analytics
        <Icon w={6} h={10} sw={1.2}>
          <path d="M5.500.5L1 5l4.500 4.500" />
        </Icon>
      </SideTab>
    </SideTabs>
    <Source>
      <Icon w={17} h={17}>
        <ellipse cx="6" cy="2.500" rx="4.500" ry="2" />
        <path d="M1.500 2.500V12c0 1 1 1.500 2.500 1.800M1.500 6c0 1 1 1.500 2 1.800M1.500 9.500c0 .7.700 1.200 1.500 1.500M10.500 2.500v2" />
        <ellipse cx="9.500" cy="6.500" rx="4.500" ry="2" />
        <path d="M5 6.500v7c0 1 1.500 2 3.500 2M14 6.500v3M5 10c1 1.500 3 1.500 4 1.500" />
        <circle cx="13" cy="13" r="3.700" fill="#3b82a4" stroke="none" />
        <path d="M11.300 13l1.300 1.300 2.200-2.500" stroke="#fff" />
      </Icon>
      Bangalore
    </Source>
    <SearchRow>
      <SearchBox>
        Search
        <Magnifier s={11} />
      </SearchBox>
      <Tool $gap={3} $w={14}>
        <Icon w={13} h={13}>
          <path d="M.7.5h11.600L8 6.500v5L5.200 12.500v-6z" />
        </Icon>
      </Tool>
      <Tool $gap={6} $w={1}>
        <Icon w={1} h={18} c="#d4d4d4">
          <path d="M.5 0v18" />
        </Icon>
      </Tool>
      <Tool $gap={6} $w={12}>
        <Icon w={12} h={11}>
          <path d="M0 .5h12M0 3.500h12M0 6.500h12M0 9.500h12" strokeDasharray="3 1" strokeWidth="1.200" />
        </Icon>
      </Tool>
      <Caret $gap={9} $s={3.5} />
    </SearchRow>
    <TablesHead>Tables</TablesHead>
    <FieldArea>
      <Fields>
        {dims.map(([k, name]) => (
          <Field key={name} $italic={name === "Measure Names"}>
            <FieldIcon>{k === "globe" ? <Globe /> : k === "hash" ? <Hash /> : <Abc>Abc</Abc>}</FieldIcon>
            {name}
          </Field>
        ))}
        <FieldRule />
        {measures.map((name) => (
          <Field key={name}>
            <FieldIcon>
              <Hash />
            </FieldIcon>
            {name}
          </Field>
        ))}
      </Fields>
      <Scroll>
        <ScrollEnd>
          <Icon w={8} h={6} sw={2}>
            <path d="M.7 5L4 1.500 7.300 5" />
          </Icon>
        </ScrollEnd>
        <Thumb />
        <ScrollEnd>
          <Icon w={8} h={6} sw={2}>
            <path d="M.7 1L4 4.500 7.300 1" />
          </Icon>
        </ScrollEnd>
      </Scroll>
    </FieldArea>
  </Side>
);

const MarksCard = () => (
  <Card $h={264}>
    <CardTitle>Marks</CardTitle>
    <MarksBody>
      <Select $w={140} $h={21} $drop={18}>
        <SelectText $size={12} $pad={12}>
          <Icon w={10} h={10} c="#aaa">
            <rect x=".5" y=".5" width="9" height="9" />
          </Icon>
          Automatic
        </SelectText>
        <Drop>
          <Caret $s={3.5} />
        </Drop>
      </Select>
      <MarkGrid>
        <MarkButton>
          <Dots4 />
          Color
        </MarkButton>
        <MarkButton>
          <Sizes />
          Size
        </MarkButton>
        <MarkButton>
          <TBox />
          Label
        </MarkButton>
        <MarkButton>
          <Icon w={14} h={12}>
            <circle cx="7" cy="3" r="2.200" fill="#555" stroke="none" />
            <circle cx="2" cy="9" r="1.500" />
            <circle cx="7" cy="9" r="1.500" />
            <circle cx="12" cy="9" r="1.500" />
          </Icon>
          Detail
        </MarkButton>
        <MarkButton>
          <Icon w={14} h={14}>
            <path d="M.5.5h13v9h-3v3.500l-3.500-3.500H.5z" />
          </Icon>
          Tooltip
        </MarkButton>
      </MarkGrid>
      <Pills>
        <PillRow>
          <Sizes />
          <Pill $c="#00b180">SUM(Vaastu C..</Pill>
        </PillRow>
        <PillRow>
          <Dots4 />
          <Pill $c="#00b180">SUM(Vaastu C..</Pill>
        </PillRow>
        <PillRow>
          <TBox />
          <Pill $c="#4996b2">Location</Pill>
        </PillRow>
      </Pills>
    </MarksBody>
  </Card>
);

const NewTab = ({ children }: { children: React.ReactNode }) => (
  <Tab $w={32} $pad={9}>
    <Icon w={16} h={15}>
      {children}
      <path d="M11 7v8M7 11h8" strokeWidth="2" stroke="#555" />
    </Icon>
  </Tab>
);

export default function App() {
  return (
    <>
      <Global />
      <Window>
        <TitleBar>
          <Sparks s={15} />
          <TitleText>Tableau - Tableau storyboard - Tableau license expires in 3 days</TitleText>
          <Controls>
            <Icon w={11} h={11} c="#000">
              <path d="M0 5.500h10" />
            </Icon>
            <Icon w={11} h={11} c="#000">
              <path d="M.5 2.500h8v8h-8zM2.500 2.500v-2h8v8h-2" />
            </Icon>
            <Icon w={11} h={11} c="#000">
              <path d="M.5.5l10 10M10.500.5l-10 10" />
            </Icon>
          </Controls>
        </TitleBar>
        <MenuBar>
          <MenuItem $w={8} />
          {menu.map(([t, w]) => (
            <MenuItem key={t} $w={w}>
              {t}
            </MenuItem>
          ))}
        </MenuBar>
        <MainToolbar />
        <Work>
          <DataPane />
          <Shelves>
            <Card $h={62}>
              <CardTitle>Pages</CardTitle>
            </Card>
            <Card $h={78}>
              <CardTitle>Filters</CardTitle>
            </Card>
            <MarksCard />
          </Shelves>
          <Canvas>
            <Shelf>
              <ShelfName>
                <Icon w={12} h={12} sw={2}>
                  <path d="M2 4v8M6 4v8M10 4v8M2 0v2M6 0v2M10 0v2" />
                </Icon>
                Columns
              </ShelfName>
            </Shelf>
            <Shelf>
              <ShelfName>
                <Icon w={12} h={12} sw={2}>
                  <path d="M4 2h8M4 6h8M4 10h8M0 2h2M0 6h2M0 10h2" />
                </Icon>
                Rows
              </ShelfName>
            </Shelf>
            <ViewRow>
              <View>
                <ViewTitle>Tree maps showing vastu complaints</ViewTitle>
                <TreeMap />
              </View>
              <Legend>
                <LegendTitle>SUM(Vaastu Compliant)</LegendTitle>
                <Ramp />
                <RampEnds>
                  <span>0</span>
                  <span>6,849</span>
                </RampEnds>
              </Legend>
            </ViewRow>
          </Canvas>
        </Work>
        <Tabs>
          <Tab $w={131} $pad={9}>
            <Icon w={10} h={12}>
              <ellipse cx="5" cy="2.500" rx="3.500" ry="2" />
              <path d="M1.500 2.500v7c0 1 1.500 2 3.500 2s3.500-1 3.500-2v-7" />
            </Icon>
            Data Source
          </Tab>
          {sheets.map(([t, w]) => (
            <Tab key={t} $w={w} $pad={t === "Sheet 1" ? 6 : 5} $active={t === "Sheet 4"}>
              {t}
            </Tab>
          ))}
          {boards.map(([t, w]) => (
            <Tab key={t} $w={w} $pad={7}>
              <GridIcon />
              {t}
            </Tab>
          ))}
          <Tab $w={71} $pad={7}>
            <Book />
            Story 1
          </Tab>
          <NewTab>
            <path d="M7 11.500H.5V.5h12V6M3.500 9V6.500M6.500 9V4.500M9.500 6.500V3.500" />
          </NewTab>
          <NewTab>
            <path d="M7 10.500H.5V.5h10V6M5.500 0v11M0 5.500h11" />
          </NewTab>
          <NewTab>
            <path d="M.5 1c2-.3 4 0 5 1.500 1-1.500 3-1.800 5-1.500V6M.5 1v9c2-.3 4 0 5 1.500v-9" />
          </NewTab>
        </Tabs>
        <Status>
          <StatusText $w={3} />
          <StatusText $w={75} $ls={-0.2}>1776 marks</StatusText>
          <StatusText $w={106} $ls={-0.35}>1 row by 1 column</StatusText>
          <StatusText $w={815} $ls={0.13}>SUM(Vaastu Compliant): 208,837</StatusText>
          <StatusCell $w={127}>
            <Tool $gap={5} $w={13}>
              <Icon w={11} h={14}>
                <circle cx="5.500" cy="3" r="2.500" />
                <path d="M.5 12.500V10c0-1.700 1-2.500 2.500-2.500h5c1.500 0 2.500.8 2.500 2.500v2.500z" />
              </Icon>
            </Tool>
            <Tool $gap={7} $w={52}>Diwakar P</Tool>
            <Caret $gap={34} $s={4} $c="#000" />
          </StatusCell>
          <StatusCell $w={27} />
          <StatusCell $w={27} />
          <StatusCell $w={47} />
          <StatusCell $w={71}>
            <Tool $gap={8} $w={56}>
              <Icon w={56} h={8} c="none">
                <path d="M0 0h1.500v8H0zM7 0v8L2 4zM22 0v8l-5-4zM33 0v8l5-4zM48 0v8l5-4zM53.500 0H55v8h-1.500z" fill="#b4b4b4" />
              </Icon>
            </Tool>
          </StatusCell>
          <StatusCell $w={68}>
            <Tool $gap={8} $w={54}>
              <Icon w={54} h={11} c="none">
                <path d="M0 0h3v3H0zM4 0h3v3H4zM8 0h3v3H8zM0 4h3v3H0zM4 4h3v3H4zM8 4h3v3H8zM0 8h3v3H0zM4 8h3v3H4zM8 8h3v3H8zM21 0h11v6H21zM21 8h3v3h-3zM25 8h3v3h-3zM29 8h3v3h-3z" fill="#b8b8b8" />
                <path d="M43 0h11v11H43z" fill="#5c5c5c" />
              </Icon>
            </Tool>
          </StatusCell>
        </Status>
        <Taskbar>
          <Launch $gap={0} $w={48}>
            <Icon w={16} h={16} c="none">
              <path d="M0 2.300L6.800 1.300V7.600H0zM7.600 1.200L16 0V7.600H7.600zM0 8.400H6.800V14.700L0 13.700zM7.600 8.400H16V16L7.600 14.800z" fill="#000" />
            </Icon>
          </Launch>
          <TaskSearch>
            <Magnifier s={17} c="#111" />
            <TaskSearchText>Type here to search</TaskSearchText>
            <svg width="66" height="38" viewBox="0 0 66 38">
              <defs>
                <linearGradient id="cliff" x1="0" x2="1">
                  <stop offset="0" stopColor="#7d5a3c" />
                  <stop offset=".45" stopColor="#c9a478" />
                  <stop offset="1" stopColor="#6b4526" />
                </linearGradient>
                <linearGradient id="wall" x1="0" x2="0" y1="0" y2="1">
                  <stop offset="0" stopColor="#d0a266" />
                  <stop offset="1" stopColor="#8c5a28" />
                </linearGradient>
              </defs>
              <path d="M18 12l16-1 16 1-3 26H22z" fill="url(#wall)" />
              <path d="M0 12c6-2 16-2 22 1l-1 12 2 13H4L2 24z" fill="url(#cliff)" />
              <path d="M44 14l8-5 14-2v31H42z" fill="url(#wall)" />
              <path d="M0 8l4-2 8 1 9 1 1 4-20 2z" fill="#efe2d2" />
              <path d="M0 8l5-3 4 2 5-1 7 3-10-.5zM49 7l3-4 6 1 2-3 6 1v4l-8 1z" fill="#d28a62" />
              <path d="M50 7l15-1v4l-15 1z" fill="#efe2d2" />
              <path d="M24 15v5M27 14v5" stroke="#7b5128" strokeWidth="1" />
              <path d="M32 17h3v7h-3zM40 14h3v4h-3z" fill="#f7ecd8" />
              <path d="M30 26c2-3 5-3 7 0l2 12H29z" fill="#2e231c" />
              <path d="M30 37c1-3 2-4 5-4l-1 5z" fill="#5ac3e6" />
              <path d="M59 10c2-3 4-2 4 1l-2 7-4 2c-3-2-1-7 2-10zM41 27c3-2 4 1 3 4l-4 4c-2-2-1-6 1-8zM48 33c2-1 4 1 4 5h-6zM20 31c3-1 5 2 4 7h-4zM55 18c2 1 2 4 0 5-2 0-2-4 0-5zM63 25l3-3v9l-3-2z" fill="#58952c" />
            </svg>
          </TaskSearch>
          <Launch $gap={0} $w={48}>
            <Icon w={16} h={17} c="#111" sw={1.3}>
              <path d="M.7 0v3.500h10V0M.7 17v-3.500h10V17M.7 6h10v5H.7zM14.500 0v4M14.500 10v7" />
              <path d="M13.500 5.500h2v2.500h-2z" fill="#111" stroke="none" />
            </Icon>
          </Launch>
          <Launch $gap={3} $w={48}>
            <svg width="24" height="24" viewBox="0 0 24 24">
              <defs>
                <linearGradient id="eg" x1="0" x2="1">
                  <stop offset="0" stopColor="#2aa9e0" />
                  <stop offset="1" stopColor="#5fd64f" />
                </linearGradient>
                <linearGradient id="eb" x1="0" x2="0" y1="0" y2="1">
                  <stop offset="0" stopColor="#1f8fd8" />
                  <stop offset="1" stopColor="#0f58a8" />
                </linearGradient>
              </defs>
              <circle cx="12" cy="12" r="12" fill="url(#eb)" />
              <path d="M.5 9C2 3 6.500 0 12 0c7 0 12 5 12 10.500 0 4-3 6-6 6-3.500 0-4.500-1.500-3.500-3 1.500-3-1-6-5-6C5.500 7.500 2 8.500.5 9z" fill="url(#eg)" />
              <path d="M14.500 13.500c-1.500 2 0 4.500 4 4.500 2 0 3.500-.6 4.500-1.200C21 20 18 20.500 15 20c-5-1-6.500-6-3.500-9 2 0 4 1 3 2.500z" fill="#d9edf5" />
            </svg>
          </Launch>
          <Launch $gap={4} $w={41} $open>
            <svg width="22" height="18" viewBox="0 0 22 18">
              <path d="M0 1c0-.6.4-1 1-1h8l1.500 2H20c1 0 1 1 1 1v12H0z" fill="#e3a21a" />
              <path d="M1 4h20c.6 0 1 .5 1 1v12c0 .6-.5 1-1 1H1z" fill="#fdd165" />
              <path d="M4 17.500v-6c0-1 .7-1.500 1.500-1.500h11c1 0 1.500.6 1.500 1.500v6h-3.500v-4h-7v4z" fill="#3a94dc" />
            </svg>
          </Launch>
          <Launch $gap={4} $w={48}>
            <svg width="24" height="24" viewBox="0 0 24 24">
              <path d="M8 6V4a4 4 0 0 1 8 0v2" fill="none" stroke="#111" strokeWidth="1.400" />
              <path d="M.5 5.500h23v17c0 .8-.5 1-1 1h-21c-.6 0-1-.3-1-1z" fill="#080808" />
              <path d="M6.500 9h5v5h-5z" fill="#f25022" />
              <path d="M12.500 9h5v5h-5z" fill="#7fba00" />
              <path d="M6.500 15h5v5h-5z" fill="#00a4ef" />
              <path d="M12.500 15h5v5h-5z" fill="#ffb900" />
            </svg>
          </Launch>
          <Launch $gap={2} $w={48}>
            <svg width="24" height="20" viewBox="0 0 24 20">
              <path d="M0 6.500L12 0l12 6.500V19H0z" fill="#3c3f42" />
              <path d="M1.500 6.500h21L12 13l5 5z" fill="#d2e6ed" />
              <path d="M1.500 6.500L12 13l3.500-2.500L19 15" fill="#3c3f42" />
            </svg>
          </Launch>
          <Launch $gap={5} $w={40} $open>
            <svg width="24" height="24" viewBox="0 0 24 24">
              <defs>
                <linearGradient id="ff" x1=".8" x2=".2" y1="0" y2="1">
                  <stop offset="0" stopColor="#ffe14a" />
                  <stop offset=".5" stopColor="#ff8a1f" />
                  <stop offset="1" stopColor="#f2296b" />
                </linearGradient>
              </defs>
              <path d="M2 5l1.500 1C4 5 5 4 5.500 3.500L6.500 6c2-.7 4-.5 5 0 0-2 1.500-4.500 3-6 .5 3 4 4 5.500 6 1 0 1 0 1.500 1C26 16 21 24 12 24 5 24 0 18.500.5 12 .6 9 1.500 7 2 5z" fill="url(#ff)" />
              <circle cx="12.500" cy="12.500" r="5.500" fill="#7542e5" />
              <path d="M5 9c3-1.500 5-.5 7 .5 1 .8 0 1.800-2 2.200-2 .5-2 3 1 4 2.500.7 4-.5 5.500-1-1 4-8 5-11 0z" fill="#ff980e" />
            </svg>
          </Launch>
          <Launch $gap={5} $w={45} $open $active>
            <Sparks s={23} c="#5b9cc0" />
          </Launch>
          <Launch $gap={8} $w={40} $open>
            <svg width="22" height="22" viewBox="0 0 22 22">
              <rect width="22" height="22" rx="4" fill="#b30b00" />
              <path d="M5 16.500c-1-1.500 3-3.500 7-4.200 3-.5 5.500 0 5 1.200-1 1.500-5-1.500-6-5-.7-2.500-.5-4.500.3-4.500 1.500 0 .3 5-1.800 9C7.500 16 6 17.500 5 16.500z" fill="none" stroke="#fff" strokeWidth="1.300" />
            </svg>
          </Launch>
          <Launch $gap={204} $w={26}>
            <svg width="24" height="24" viewBox="0 0 24 24">
              <circle cx="12.500" cy="12" r="10" fill="#f5912b" />
              <path d="M3 9.500a3 3 0 0 1-.5-5.500c1-1 2-1 3-.5C7 .5 12 1 12 4.500c3 .5 2.500 5 0 5z" fill="#b9d0f3" stroke="#7d9cd6" strokeWidth=".7" />
              <path d="M13 21a3 3 0 0 1 0-5.500c.5-3 5-4 6.500-1C23 14 25 21 21 21z" fill="#b9d0f3" stroke="#7d9cd6" strokeWidth=".7" />
            </svg>
          </Launch>
          <Weather>28°C&nbsp; Partly sunny</Weather>
          <Launch $gap={2} $w={14}>
            <Icon w={13} h={8} c="#111" sw={1.3}>
              <path d="M.7 7l5.800-6 5.800 6" />
            </Icon>
          </Launch>
          <Launch $gap={11} $w={13}>
            <Icon w={12} h={16} c="#111" sw={1.2}>
              <path d="M2 2.500C4 .3 7 .3 9 2.500M2 13.500c2 2.200 5 2.200 7 0M.6 5h7.500v6H.6zM8 7.500l3-2v5l-3-2" />
            </Icon>
          </Launch>
          <Launch $gap={9} $w={15}>
            <Icon w={15} h={9} c="#111">
              <path d="M.5.500h12v8H.5zM14 3v3" />
              <path d="M2 2h6v5H2z" fill="#111" stroke="none" />
            </Icon>
          </Launch>
          <Launch $gap={10} $w={15}>
            <Icon w={14} h={14} c="#222" sw={1.1}>
              <path d="M1 12.500C1.500 6 6 1.500 13 1M4 13c.5-5 4-8.500 9-9M7 13c.5-3 2.500-5.500 6-6" />
              <circle cx="11" cy="11.500" r="1.500" fill="#111" stroke="none" />
            </Icon>
          </Launch>
          <Launch $gap={7} $w={17}>
            <Icon w={17} h={14} c="#111" sw={1.1}>
              <path d="M.6 5v4.500h2.200L6.500 13V1.500L2.800 5zM9 5c1 1.300 1 3 0 4.500" />
              <path d="M11 3c2 2.500 2 6 0 8.500M13 1c3.500 3.500 3.500 9 0 12.500" stroke="#8a94a0" />
            </Icon>
          </Launch>
          <Stack $gap={6} $w={30}>
            ENG
            <br />
            IN
          </Stack>
          <Stack $gap={3} $w={64}>
            9:27 PM
            <br />
            10/12/2023
          </Stack>
          <Launch $gap={11} $w={18}>
            <Icon w={17} h={17} c="#111" sw={1.2}>
              <path d="M.7.7h15.600v11.500H11l-2.500 3-2.500-3H.7z" />
            </Icon>
          </Launch>
          <Edge />
        </Taskbar>
      </Window>
    </>
  );
}
